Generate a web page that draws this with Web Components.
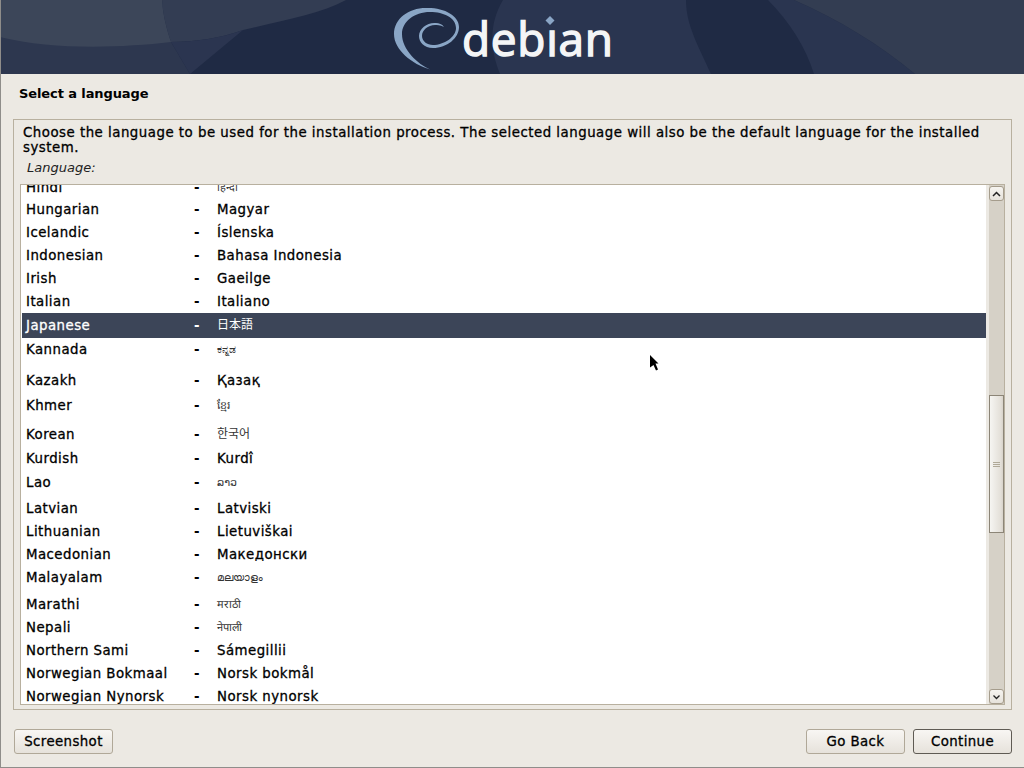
<!DOCTYPE html>
<html>
<head>
<meta charset="utf-8">
<title>Debian installer</title>
<style>
    html, body { margin: 0; padding: 0; background: #ece9e3; overflow: hidden; }
    body { font: 13.33px "DejaVu Sans", "Noto Sans CJK JP", sans-serif; color: #000; }
</style>
</head>
<body>
<di-app>
    <di-banner></di-banner>
    <di-title>Select a language</di-title>
    <di-frame label="Language:">
        <span slot="text">Choose the language to be used for the installation process. The selected language will also be the default language for the installed system.</span>
        <lang-list>
            <lang-row h="22" name="Hindi" native="हिन्दी" kind="small"></lang-row>
            <lang-row h="23" name="Hungarian" native="Magyar"></lang-row>
            <lang-row h="23" name="Icelandic" native="Íslenska"></lang-row>
            <lang-row h="23" name="Indonesian" native="Bahasa Indonesia"></lang-row>
            <lang-row h="23" name="Irish" native="Gaeilge"></lang-row>
            <lang-row h="23" name="Italian" native="Italiano"></lang-row>
            <lang-row h="25" name="Japanese" native="日本語" kind="cjk" selected></lang-row>
            <lang-row h="31" name="Kannada" native="ಕನ್ನಡ" kind="small"></lang-row>
            <lang-row h="25" name="Kazakh" native="Қазақ"></lang-row>
            <lang-row h="29" name="Khmer" native="ខ្មែរ" kind="small"></lang-row>
            <lang-row h="24" name="Korean" native="한국어" kind="cjk"></lang-row>
            <lang-row h="24" name="Kurdish" native="Kurdî"></lang-row>
            <lang-row h="26" name="Lao" native="ລາວ" kind="small"></lang-row>
            <lang-row h="23" name="Latvian" native="Latviski"></lang-row>
            <lang-row h="23" name="Lithuanian" native="Lietuviškai"></lang-row>
            <lang-row h="23" name="Macedonian" native="Македонски"></lang-row>
            <lang-row h="27" name="Malayalam" native="മലയാളം" kind="small"></lang-row>
            <lang-row h="23" name="Marathi" native="मराठी" kind="small"></lang-row>
            <lang-row h="23" name="Nepali" native="नेपाली" kind="small"></lang-row>
            <lang-row h="23" name="Northern Sami" native="Sámegillii"></lang-row>
            <lang-row h="23" name="Norwegian Bokmaal" native="Norsk bokmål"></lang-row>
            <lang-row h="23" name="Norwegian Nynorsk" native="Norsk nynorsk"></lang-row>
        </lang-list>
    </di-frame>
    <di-actions>
        <di-button>Screenshot</di-button>
        <span slot="right"><di-button>Go Back</di-button></span>
        <span slot="right"><di-button primary>Continue</di-button></span>
    </di-actions>
    <di-cursor></di-cursor>
</di-app>

<script>
class DiApp extends HTMLElement {
    connectedCallback() {
        if (this.shadowRoot) return;
        this.attachShadow({ mode: 'open' });
        this.shadowRoot.innerHTML = `
            <style>
                :host {
                    display: flex;
                    flex-direction: column;
                    position: relative;
                    box-sizing: border-box;
                    width: 1024px;
                    height: 768px;
                    background: #ece9e3;
                    border-left: 1px solid #8f8d8a;
                    border-bottom: 1px solid #8f8d8a;
                    overflow: hidden;
                }
            </style>
            <slot></slot>
        `;
    }
}
customElements.define('di-app', DiApp);

class DiBanner extends HTMLElement {
    connectedCallback() {
        if (this.shadowRoot) return;
        this.attachShadow({ mode: 'open' });
        this.shadowRoot.innerHTML = `
            <style>
                :host {
                    display: flex;
                    justify-content: center;
                    position: relative;
                    height: 74px;
                    background: #1f2a44;
                    overflow: hidden;
                }
                .bg { position: absolute; left: -1px; top: 0; }
                .logo { position: relative; display: flex; width: 220px; height: 74px; margin-left: -17px; }
                .logo svg { flex: none; margin-right: -6px; }
                .word {
                    font: 400 46px/74px "Open Sans", sans-serif;
                    color: #f4f5f6;
                    letter-spacing: 0.7px;
                    -webkit-text-stroke: 1.4px #f4f5f6;
                    margin-top: 1px;
                    margin-left: 4px;
                }
                .dot { position: absolute; left: 150px; top: 15px; }
            </style>
            <svg class="bg" width="1024" height="74" viewBox="0 0 1024 74">
                <rect width="1024" height="74" fill="#1f2a44"/>
                <path d="M0 0H162C163 20 167 32 171 42L190 74H0Z" fill="#2d374f"/>
                <path d="M171 42C195 42 222 38 243 30C285 20 320 14 346 0H162C163 16 167 30 171 42Z" fill="#333d53"/>
                <path d="M171 42C195 42 222 38 243 30L190 74Z" fill="#2b3550"/>
                <path d="M0 0H162C163 16 167 30 171 42C120 48 50 50 0 37Z" fill="#3c4659"/>
                <path d="M503 0C491 20 488 45 500 74H711C698 45 686 25 686 0Z" fill="#2a3550"/>
                <path d="M768 0C790 22 806 48 814 74H915C880 45 840 20 794 0Z" fill="#2a3550"/>
                <path d="M794 0C840 20 880 45 915 74H1024V0Z" fill="#333d52"/>
            </svg>
            <div class="logo">
                <svg width="70" height="74" viewBox="394 0 70 74">
                    <path fill="#8aa6c6" d="M430 69.5C412 64 394 50 394 34C394 18 410 7 428 8C445 8 459 16 459 27C459 38 447 48 433 48C424 48 419 42 419 36C419 28 428 22 436 23C439 23 442 24 444 27C440 25 437 25 435 25C428 25 422 30 422 36C422 41 427 45 433 45C444 45 456 37 456 28C456 18 444 12 430 12C414 12 402 22 402 34C402 50 418 64 430 69.5Z"/>
                </svg>
                <span class="word">debian</span>
                <svg class="dot" width="12" height="13" viewBox="0 0 12 13">
                    <rect width="12" height="13" fill="#2a3550"/>
                    <path d="M6 1L10.5 5.5L6 10L1.5 5.5Z" fill="#8aa6c6"/>
                </svg>
            </div>
        `;
    }
}
customElements.define('di-banner', DiBanner);

class DiTitle extends HTMLElement {
    connectedCallback() {
        if (this.shadowRoot) return;
        this.attachShadow({ mode: 'open' });
        this.shadowRoot.innerHTML = `
            <style>
                :host {
                    display: block;
                    box-sizing: border-box;
                    height: 45px;
                    padding: 12px 0 0 18px;
                    line-height: 15px;
                    font-size: 13px;
                    font-weight: 700;
                    letter-spacing: -0.1px;
                }
            </style>
            <slot></slot>
        `;
    }
}
customElements.define('di-title', DiTitle);

class DiFrame extends HTMLElement {
    connectedCallback() {
        if (this.shadowRoot) return;
        this.attachShadow({ mode: 'open' });
        this.shadowRoot.innerHTML = `
            <style>
                :host {
                    display: flex;
                    flex-direction: column;
                    box-sizing: border-box;
                    width: 999px;
                    height: 591px;
                    margin-left: 12px;
                    padding: 5px 6px 4px 6px;
                    border: 1px solid #b8b09f;
                }
                .text {
                    margin: 0 3px;
                    line-height: 15px;
                    letter-spacing: 0.5px;
                    -webkit-text-stroke: 0.3px #000;
                }
                .label {
                    margin: 5px 0 9px 7px;
                    line-height: 15px;
                    font-size: 13px;
                    font-style: italic;
                    color: #222;
                }
                ::slotted(lang-list) { flex: 1; min-height: 0; }
            </style>
            <div class="text"><slot name="text"></slot></div>
            <div class="label">${this.getAttribute('label')}</div>
            <slot></slot>
        `;
    }
}
customElements.define('di-frame', DiFrame);

class LangList extends HTMLElement {
    connectedCallback() {
        if (this.shadowRoot) return;
        this.attachShadow({ mode: 'open' });
        this.shadowRoot.innerHTML = `
            <style>
                :host {
                    display: flex;
                    box-sizing: border-box;
                    border: 1px solid #b8b09f;
                    background: #fff;
                }
                .view {
                    flex: 1;
                    min-width: 0;
                    overflow: hidden;
                    padding-left: 1px;
                }
                .rows { margin-top: -9px; }
            </style>
            <div class="view"><div class="rows"><slot></slot></div></div>
            <di-scrollbar></di-scrollbar>
        `;
    }
}
customElements.define('lang-list', LangList);

class LangRow extends HTMLElement {
    connectedCallback() {
        if (this.shadowRoot) return;
        this.attachShadow({ mode: 'open' });
        this.shadowRoot.innerHTML = `
            <style>
                :host {
                    display: grid;
                    grid-template-columns: 168px 23px 1fr;
                    align-items: start;
                    box-sizing: border-box;
                    height: ${this.getAttribute('h')}px;
                    padding: 4px 0 0 4px;
                    line-height: 15px;
                    letter-spacing: 0.46px;
                    -webkit-text-stroke: 0.3px currentColor;
                }
                :host([selected]) {
                    background: #3c4558;
                    color: #fff;
                    padding-top: 5px;
                }
                .small, .cjk {
                    letter-spacing: 0;
                    color: #333;
                    -webkit-text-stroke: 0;
                }
                .small { font-size: 11px; }
                .cjk { font-size: 12px; }
                :host([selected]) .cjk { color: #fff; }
                .dash { font-weight: 700; -webkit-text-stroke: 0; }
            </style>
            <span>${this.getAttribute('name')}</span>
            <span class="dash">-</span>
            <span class="${this.getAttribute('kind') || ''}">${this.getAttribute('native')}</span>
        `;
    }
}
customElements.define('lang-row', LangRow);

class DiScrollbar extends HTMLElement {
    connectedCallback() {
        if (this.shadowRoot) return;
        this.attachShadow({ mode: 'open' });
        this.shadowRoot.innerHTML = `
            <style>
                :host {
                    display: flex;
                    flex-direction: column;
                    box-sizing: border-box;
                    flex: none;
                    width: 18px;
                    padding: 1px 0 0 3px;
                    background: linear-gradient(to right, #ece9e3 3px, #d6d1c7 3px);
                }
                .btn {
                    flex: none;
                    display: flex;
                    align-items: center;
                    justify-content: center;
                    box-sizing: border-box;
                    height: 15px;
                    border: 1px solid #a59c8c;
                    border-radius: 3px;
                    background: linear-gradient(#f6f4f0, #e6e2db);
                }
                .track { flex: 1; min-height: 0; }
                .thumb {
                    box-sizing: border-box;
                    height: 138px;
                    margin-top: 194px;
                    display: flex;
                    flex-direction: column;
                    align-items: center;
                    justify-content: center;
                    gap: 1px;
                    border: 1px solid #8c8577;
                    background: linear-gradient(to right, #f6f5f2, #e4e0d9 80%, #d9d4cb);
                }
                .thumb i { width: 7px; height: 1px; background: #b0a998; }
            </style>
            <div class="btn"><svg width="9" height="6" viewBox="0 0 9 6"><path d="M1 5L4.5 1.5L8 5" fill="none" stroke="#222" stroke-width="1.5"/></svg></div>
            <div class="track"><div class="thumb"><i></i><i></i><i></i></div></div>
            <div class="btn"><svg width="9" height="6" viewBox="0 0 9 6"><path d="M1.5 1.5L4.5 4.5L7.5 1.5" fill="none" stroke="#222" stroke-width="1.3"/></svg></div>
        `;
    }
}
customElements.define('di-scrollbar', DiScrollbar);

class DiActions extends HTMLElement {
    connectedCallback() {
        if (this.shadowRoot) return;
        this.attachShadow({ mode: 'open' });
        this.shadowRoot.innerHTML = `
            <style>
                :host {
                    display: flex;
                    justify-content: space-between;
                    width: 998px;
                    margin: 19px 0 0 13px;
                }
                .right { display: flex; gap: 8px; }
            </style>
            <slot></slot>
            <div class="right"><slot name="right"></slot></div>
        `;
    }
}
customElements.define('di-actions', DiActions);

class DiButton extends HTMLElement {
    connectedCallback() {
        if (this.shadowRoot) return;
        this.attachShadow({ mode: 'open' });
        this.shadowRoot.innerHTML = `
            <style>
                :host {
                    display: flex;
                    align-items: center;
                    justify-content: center;
                    box-sizing: border-box;
                    width: 99px;
                    height: 25px;
                    border: 1px solid #b0a898;
                    border-radius: 3px;
                    background: linear-gradient(#f8f6f3, #e6e2db);
                    letter-spacing: 0.4px;
                    -webkit-text-stroke: 0.3px #000;
                }
                :host([primary]) { border-color: #5f5b54; }
            </style>
            <slot></slot>
        `;
    }
}
customElements.define('di-button', DiButton);

class DiCursor extends HTMLElement {
    connectedCallback() {
        if (this.shadowRoot) return;
        this.attachShadow({ mode: 'open' });
        this.shadowRoot.innerHTML = `
            <style>
                :host { position: absolute; left: 649px; top: 355px; width: 10px; height: 16px; }
            </style>
            <svg width="10" height="16" viewBox="0 0 10 16"><path d="M0 0L8.5 8.5H5.5L8 14.5L6 15.5L3.5 10L0 12.5Z" fill="#000"/></svg>
        `;
    }
}
customElements.define('di-cursor', DiCursor);
</script>
</body>
</html>
